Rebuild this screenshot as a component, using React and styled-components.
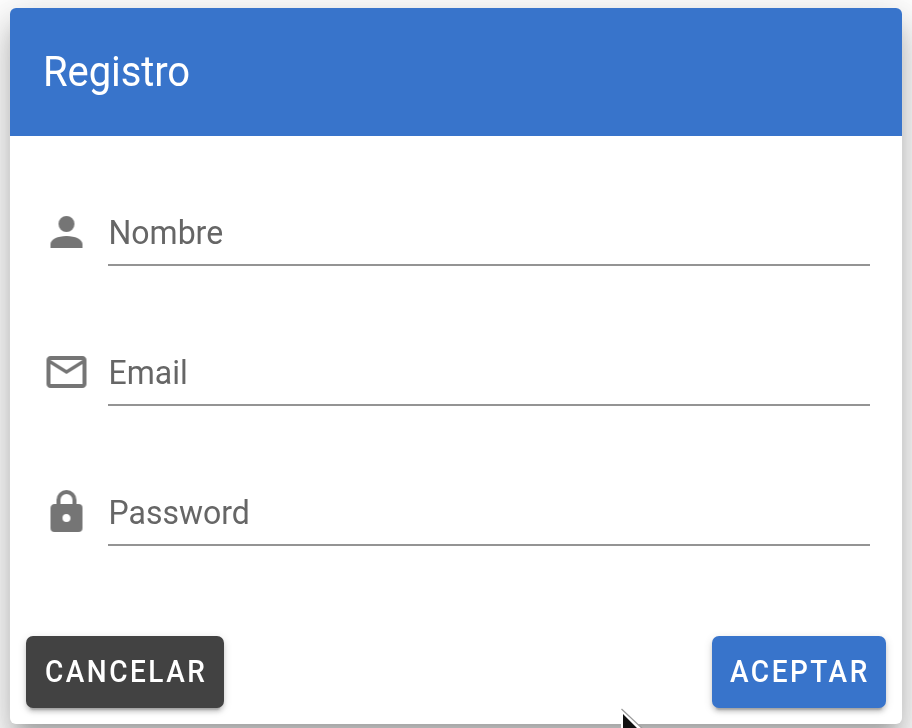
import React from "react";
import styled, { createGlobalStyle } from "styled-components";

const GlobalStyle = createGlobalStyle`
  * { box-sizing: border-box; }
  html, body { margin: 0; background: #fff; overflow: hidden; }
  body { font-family: Roboto, "Liberation Sans", sans-serif; }
`;

const Page = styled.div`
  position: relative;
  width: 912px;
  height: 728px;
  padding: 8px 10px 4px;
  overflow: hidden;
`;

const Card = styled.form`
  display: flex;
  flex-direction: column;
  height: 716px;
  border-radius: 6px;
  background: #fff;
  box-shadow: 0 14px 16px -8px rgba(0, 0, 0, 0.2),
    0 24px 34px 4px rgba(0, 0, 0, 0.14), 0 10px 44px 8px rgba(0, 0, 0, 0.12);
`;

const Toolbar = styled.header`
  display: flex;
  align-items: center;
  height: 128px;
  padding: 0 33px;
  border-radius: 6px 6px 0 0;
  background: #3874cb;
`;

const Title = styled.h1`
  margin: 0;
  color: #fff;
  font-size: 40px;
  font-weight: 400;
  line-height: 60px;
  letter-spacing: -0.1px;
  transform: scaleY(1.05);
  will-change: transform;
`;

const Fields = styled.div`
  display: flex;
  flex: 1;
  flex-direction: column;
  gap: 76px;
  padding: 66px 32px 0;
`;

const Field = styled.label`
  display: flex;
  height: 64px;
`;

const FieldIcon = styled.svg`
  flex: none;
  width: 48px;
  height: 48px;
  margin: 6px 18px 0 0;
  fill: #757575;
  transform: translateX(0.5px);
  will-change: transform;
`;

const FieldControl = styled.span`
  flex: 1;
  border-bottom: 2px solid #949494;
`;

const FieldLabel = styled.span`
  display: inline-block;
  color: #666;
  font-size: 32px;
  line-height: 62px;
  transform: translate(0.5px, -0.5px) scaleY(1.05);
  will-change: transform;
`;

const Actions = styled.footer`
  display: flex;
  justify-content: space-between;
  padding: 16px;
`;

const Button = styled.button`
  width: ${({ $width }) => $width}px;
  height: 72px;
  padding: 0;
  border: 0;
  border-radius: 7px;
  background: ${({ $color }) => $color};
  color: #fff;
  font: 500 28px Roboto, "Liberation Sans", sans-serif;
  letter-spacing: 2.5px;
  text-transform: uppercase;
  box-shadow: 0 6px 2px -4px rgba(0, 0, 0, 0.2),
    0 4px 4px 0 rgba(0, 0, 0, 0.14), 0 2px 10px 0 rgba(0, 0, 0, 0.12);
`;

const ButtonLabel = styled.span`
  display: inline-block;
  transform: translate(1px, -0.5px) scaleY(1.1);
  will-change: transform;
`;

const Pointer = styled.svg`
  position: absolute;
  left: 620px;
  top: 708px;
  width: 28px;
  height: 40px;
`;

const fields = [
  {
    label: "Nombre",
    icon: "M12,4A4,4 0 0,1 16,8A4,4 0 0,1 12,12A4,4 0 0,1 8,8A4,4 0 0,1 12,4M12,14C16.42,14 20,15.79 20,18V20H4V18C4,15.79 7.58,14 12,14Z",
  },
  {
    label: "Email",
    icon: "M22 6C22 4.9 21.1 4 20 4H4C2.9 4 2 4.9 2 6V18C2 19.1 2.9 20 4 20H20C21.1 20 22 19.1 22 18V6M20 6L12 11L4 6H20M20 18H4V8L12 13L20 8V18Z",
  },
  {
    label: "Password",
    icon: "M12,17A2,2 0 0,0 14,15C14,13.89 13.1,13 12,13A2,2 0 0,0 10,15A2,2 0 0,0 12,17M18,8A2,2 0 0,1 20,10V20A2,2 0 0,1 18,22H6A2,2 0 0,1 4,20V10C4,8.89 4.9,8 6,8H7V6A5,5 0 0,1 12,1A5,5 0 0,1 17,6V8H18M12,3A3,3 0 0,0 9,6V8H15V6A3,3 0 0,0 12,3Z",
  },
];

export default function App() {
  return (
    <Page>
      <GlobalStyle />
      <Card>
        <Toolbar>
          <Title>Registro</Title>
        </Toolbar>
        <Fields>
          {fields.map(({ label, icon }) => (
            <Field key={label}>
              <FieldIcon viewBox="0 0 24 24" aria-hidden="true">
                <path d={icon} />
              </FieldIcon>
              <FieldControl>
                <FieldLabel>{label}</FieldLabel>
              </FieldControl>
            </Field>
          ))}
        </Fields>
        <Actions>
          <Button type="button" $width={198} $color="#424242">
            <ButtonLabel>Cancelar</ButtonLabel>
          </Button>
          <Button type="button" $width={174} $color="#3874cb">
            <ButtonLabel>Aceptar</ButtonLabel>
          </Button>
        </Actions>
      </Card>
      <Pointer viewBox="0 0 28 40" aria-hidden="true">
        <path d="M1 0V34L9 27L15 38L20 35L14 24H26Z" fill="#fff" />
        <path d="M3 6V31L9.500 24.500L15 36L17.500 34.500L12 23H20Z" fill="#111" />
        <path d="M1.500 1L26 24" stroke="#999" strokeWidth="1.200" fill="none" />
      </Pointer>
    </Page>
  );
}
